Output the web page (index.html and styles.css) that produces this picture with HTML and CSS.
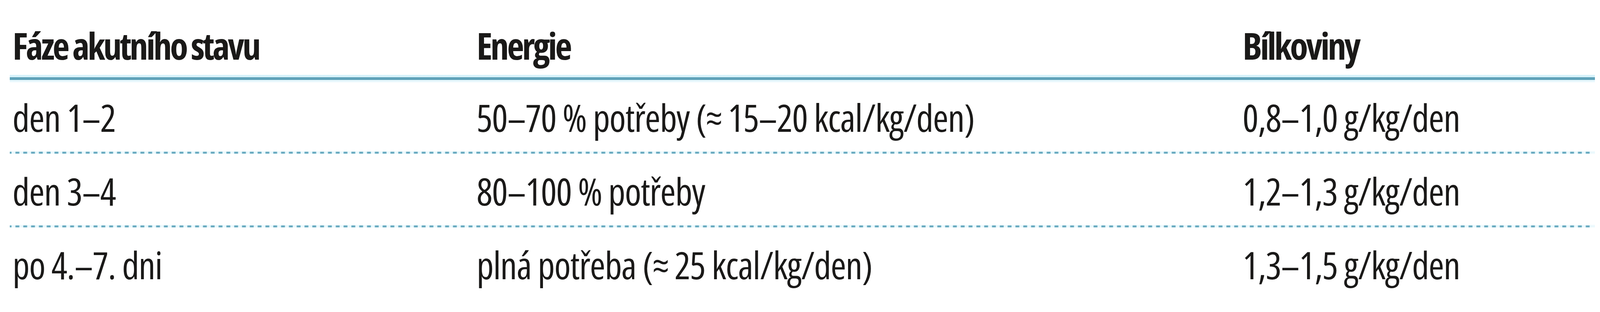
FILE: index.html
```html
<!DOCTYPE html>
<html lang="cs">
<head>
<meta charset="utf-8">
<title>Fáze akutního stavu</title>
<link rel="stylesheet" href="styles.css">
</head>
<body>
<div class="tbl">
  <div class="row head">
    <div class="cell">Fáze akutního stavu</div>
    <div class="cell">Energie</div>
    <div class="cell">Bílkoviny</div>
  </div>
  <div class="rule-thick"></div>
  <div class="row first">
    <div class="cell">den 1–2</div>
    <div class="cell">50–70 % potřeby (≈ 15–20 kcal/kg/den)</div>
    <div class="cell">0,8–1,0 g/kg/den</div>
  </div>
  <div class="rule-dot"></div>
  <div class="row">
    <div class="cell">den 3–4</div>
    <div class="cell">80–100 % potřeby</div>
    <div class="cell">1,2–1,3 g/kg/den</div>
  </div>
  <div class="rule-dot"></div>
  <div class="row">
    <div class="cell">po 4.–7. dni</div>
    <div class="cell">plná potřeba (≈ 25 kcal/kg/den)</div>
    <div class="cell">1,3–1,5 g/kg/den</div>
  </div>
</div>
</body>
</html>
```
FILE: styles.css
```css
html, body {
  margin: 0;
  padding: 0;
  background: #ffffff;
}

body {
  font-family: "Open Sans", "Noto Sans", "DejaVu Sans", sans-serif;
  font-stretch: condensed;
  color: #1a1918;
}

.tbl {
  width: 4058px;
  margin-left: 25px;
}

.row {
  display: grid;
  grid-template-columns: 1188px 1961px 1fr;
  font-size: 96px;
  line-height: 146px;
  letter-spacing: -1.5px;
  padding: 21px 0 12px;
}

.row.first {
  padding-top: 17px;
}

.row.head {
  font-size: 95px;
  line-height: 139px;
  font-weight: 700;
  letter-spacing: -5px;
  padding: 47px 0 6px;
}

.cell {
  padding-left: 7px;
  white-space: nowrap;
}

.rule-thick {
  height: 19px;
  background:
    linear-gradient(#5fa2b9, #5fa2b9) 0 6px / 100% 7px no-repeat,
    linear-gradient(#d3f1fa, #ecf9fd);
}

.rule-dot {
  height: 10px;
  background:
    repeating-linear-gradient(to right,
      #a9dbea 0, #6aaabf 2px, #6aaabf 9px, #a9dbea 11px,
      transparent 11px, transparent 20px) -6px 3px / 100% 5px no-repeat,
    linear-gradient(#ffffff, #e6f7fc 50%, #ffffff);
}
```
